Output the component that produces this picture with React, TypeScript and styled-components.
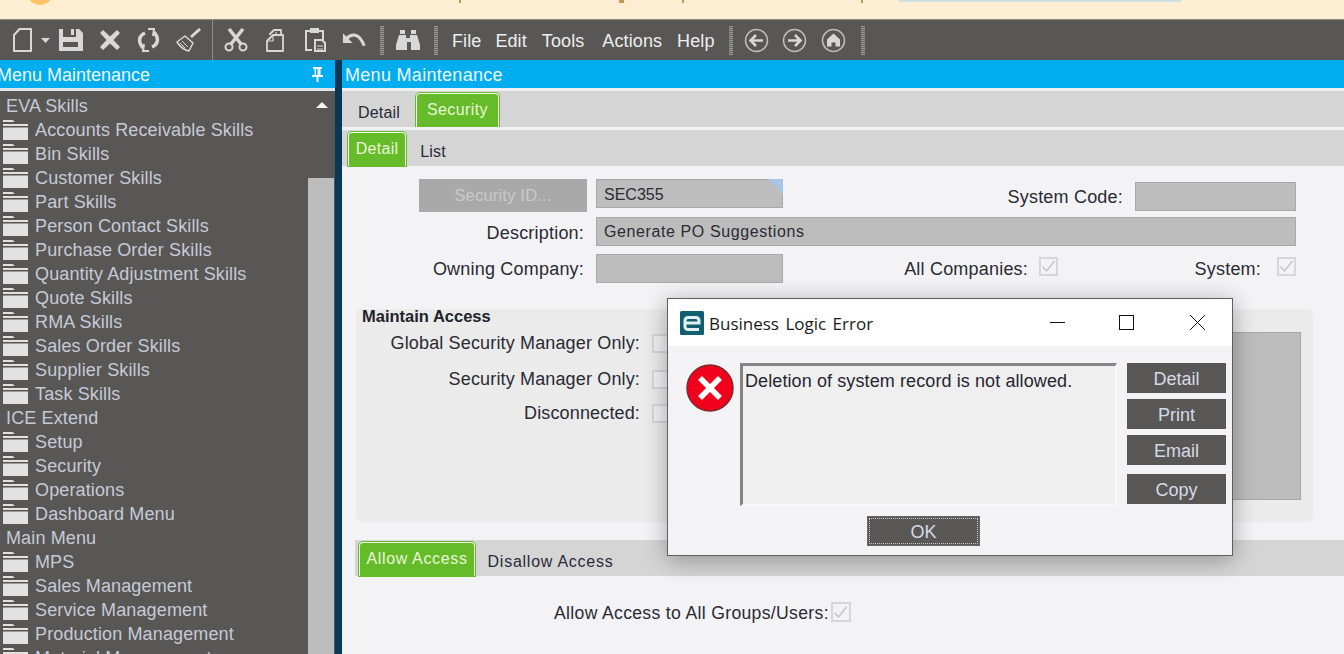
import React from "react"
import styled, { createGlobalStyle } from "styled-components"

const Global = createGlobalStyle`
  html, body {
    margin: 0;
    padding: 0;
    background: #f3f3f6;
  }
  * {
    box-sizing: border-box;
  }
`

const Page = styled.div`
  position: relative;
  width: 1344px;
  height: 654px;
  overflow: hidden;
  display: flex;
  flex-direction: column;
  font-family: "Liberation Sans", Arial, sans-serif;
  font-size: 18px;
  color: #2a2a33;
`

const Banner = styled.div`
  position: relative;
  height: 20px;
  flex: none;
  background: #fdedd3;
  border-bottom: 1px solid #8d867c;
  overflow: hidden;
`

const BannerCircle = styled.div`
  position: absolute;
  left: 27px;
  top: -21px;
  width: 26px;
  height: 26px;
  border-radius: 50%;
  background: #fdc466;
`

const BannerLink = styled.div`
  position: absolute;
  left: 899px;
  top: 0;
  width: 282px;
  height: 2px;
  background: #cfe0e2;
`

const BannerSpeck = styled.div<{ $left: number; $w?: number }>`
  position: absolute;
  left: ${p => p.$left}px;
  top: 0;
  width: ${p => p.$w ?? 2}px;
  height: 3px;
  background: #c09a55;
`

const Toolbar = styled.div`
  height: 40px;
  flex: none;
  display: flex;
  align-items: center;
  padding-left: 12px;
  background: #595755;
  color: #eeeeee;
`

const Tool = styled.svg<{ $gap: number }>`
  flex: none;
  margin-left: ${p => p.$gap}px;
  fill: none;
  stroke: #d8d8d8;
`

const ToolSolid = styled(Tool)`
  fill: #d8d8d8;
  stroke: none;
`

const Separator = styled.div<{ $gap: number }>`
  flex: none;
  align-self: stretch;
  width: 1px;
  margin-left: ${p => p.$gap}px;
  background: #8f8d8b;
`

const Grip = styled.div<{ $gap: number }>`
  flex: none;
  width: 4px;
  height: 29px;
  margin-left: ${p => p.$gap}px;
  background: repeating-linear-gradient(to bottom, #9a9896 0 1px, #6c6a68 1px 2px);
`

const MenuItem = styled.span<{ $gap: number }>`
  margin-left: ${p => p.$gap}px;
  letter-spacing: 0.1px;
  padding-top: 2px;
`

const Body = styled.div`
  flex: 1;
  min-height: 0;
  display: flex;
`

const Sidebar = styled.aside`
  width: 335px;
  flex: none;
  display: flex;
  flex-direction: column;
  overflow: hidden;
  background: #595755;
`

const Divider = styled.div`
  width: 7px;
  flex: none;
  background: #0b3756;
`

const BlueHeader = styled.div`
  height: 28px;
  flex: none;
  display: flex;
  align-items: center;
  justify-content: space-between;
  padding-top: 2px;
  background: #00adef;
  color: #eef8fd;
`

const SideTitle = styled.span`
  margin-left: -3px;
`

const MainTitle = styled.span`
  margin-left: 3px;
  letter-spacing: 0.3px;
`

const Pin = styled.svg`
  margin: -2px 12px 0 0;
  fill: #f4fbff;
`

const WhiteLine = styled.div<{ $color?: string }>`
  height: 3px;
  flex: none;
  background: ${p => p.$color ?? "#f0f1f3"};
`

const TreeArea = styled.div`
  flex: 1;
  min-height: 0;
  display: flex;
  justify-content: space-between;
`

const Tree = styled.div`
  padding-top: 3px;
  color: #c6cad6;
  letter-spacing: 0.13px;
`

const TreeGroup = styled.div`
  height: 24px;
  line-height: 24px;
  padding-left: 6px;
  white-space: nowrap;
`

const TreeItem = styled.div`
  height: 24px;
  display: flex;
  align-items: center;
  padding-left: 3px;
  white-space: nowrap;
`

const Folder = styled.svg`
  flex: none;
  margin-right: 7px;
  fill: #e2e2e2;
`

const ScrollColumn = styled.div`
  width: 27px;
  flex: none;
  display: flex;
  flex-direction: column;
  align-items: center;
`

const ScrollUp = styled.div`
  width: 0;
  height: 0;
  margin-top: 11px;
  margin-left: 1px;
  border-left: 6px solid transparent;
  border-right: 6px solid transparent;
  border-bottom: 6px solid #f4f4f4;
`

const ScrollThumb = styled.div`
  flex: 1;
  width: 26px;
  margin-top: 70px;
  margin-right: 1px;
  background: #bdbdbd;
`

const Main = styled.main`
  flex: 1;
  min-width: 0;
  display: flex;
  flex-direction: column;
  background: #f3f3f6;
`

const TabStrip = styled.div<{ $pad: number }>`
  height: 36px;
  flex: none;
  display: flex;
  align-items: flex-end;
  padding-left: ${p => p.$pad}px;
  background: #d5d5d5;
`

const Tab = styled.div<{ $active?: boolean; $w: number; $spread?: number }>`
  width: ${p => p.$w}px;
  height: ${p => (p.$active ? "34px" : "28px")};
  text-align: center;
  font-size: 16px;
  letter-spacing: ${p => p.$spread ?? 0.15}px;
  line-height: ${p => (p.$active ? "32px" : "28px")};
  white-space: nowrap;
  ${p =>
    p.$active
      ? `
    margin-right: 3px;
    background: #66bb2a;
    color: #e8f7d6;
    border: 1px solid #f3fbe9;
    border-bottom: none;
    border-radius: 4px 4px 0 0;
    box-shadow: 0 0 0 1px #66bb2a;
  `
      : `
    color: #2a2a3a;
  `}
`

const FormBlock = styled.div`
  display: flex;
  flex-direction: column;
  padding: 13px 48px 0 0;
  letter-spacing: 0.2px;
`

const FormRow = styled.div<{ $gap?: number }>`
  display: flex;
  align-items: center;
  margin-top: ${p => p.$gap ?? 0}px;
`

const IdRow = styled(FormRow)`
  align-items: flex-start;
  padding-left: 77px;
`

const IdButton = styled.div`
  width: 168px;
  height: 33px;
  display: flex;
  align-items: center;
  justify-content: center;
  margin-right: 9px;
  background: #a9a9a9;
  color: #c9c9c9;
  font-size: 16.5px;
  letter-spacing: 0.2px;
`

const Field = styled.div<{ $w?: number; $mt?: number; $ml?: number; $spread?: number; $lh?: number }>`
  position: relative;
  ${p => (p.$w ? `width: ${p.$w}px; flex: none;` : "flex: 1;")}
  height: 29px;
  margin-top: ${p => p.$mt ?? 0}px;
  margin-left: ${p => p.$ml ?? 0}px;
  padding-left: 7px;
  background: #bdbdbd;
  border: 1px solid #a8a8a8;
  line-height: ${p => p.$lh ?? 27}px;
  font-size: 16px;
  letter-spacing: ${p => p.$spread ?? 0}px;
  color: #2b2b33;
`

const FieldCorner = styled.div`
  position: absolute;
  right: -1px;
  top: -1px;
  width: 0;
  height: 0;
  border-top: 15px solid #a9c4e4;
  border-left: 15px solid transparent;
`

const FormLabel = styled.div<{ $w: number; $pt?: number; $mr?: number }>`
  width: ${p => p.$w}px;
  flex: none;
  padding-top: ${p => p.$pt ?? 0}px;
  margin-right: ${p => p.$mr ?? 0}px;
  text-align: right;
  white-space: nowrap;
`

const FlexLabel = styled.div<{ $mt?: number }>`
  flex: 1;
  text-align: right;
  white-space: nowrap;
  margin-top: ${p => p.$mt ?? 0}px;
  margin-right: 12px;
`

const Check = styled.div<{ $size?: number; $top?: number }>`
  flex: none;
  width: ${p => p.$size ?? 19}px;
  height: ${p => p.$size ?? 19}px;
  margin-top: ${p => p.$top ?? 0}px;
  border: 2px solid #d6d6d6;
  background: #f3f3f6;
  display: flex;
  align-items: center;
  justify-content: center;
`

const CheckMark = styled.svg`
  fill: none;
  stroke: #c4c4c4;
  stroke-width: 1.4;
`

const Panel = styled.section`
  position: relative;
  height: 213px;
  margin: 26px 31px 0 14px;
  padding: 23px 12px 22px 0;
  display: flex;
  justify-content: space-between;
  background: #ebebeb;
  border-radius: 6px;
  letter-spacing: 0.15px;
`

const PanelTitle = styled.div`
  position: absolute;
  left: 6px;
  top: -1px;
  font-size: 16.5px;
  font-weight: bold;
  line-height: 17px;
  letter-spacing: 0;
  color: #22222a;
`

const PanelRows = styled.div`
  display: flex;
  flex-direction: column;
`

const PanelRow = styled.div<{ $h: number }>`
  height: ${p => p.$h}px;
  display: flex;
  align-items: center;
`

const PanelCheck = styled(Check)`
  margin-left: 12px;
  background: #f1f1f3;
`

const PanelBox = styled.div`
  width: 560px;
  background: #bdbdbd;
  border: 1px solid #a8a8a8;
`

const LowerStrip = styled(TabStrip)`
  margin: 18px 0 0 13px;
`

const AccessRow = styled.div`
  display: flex;
  align-items: flex-start;
  padding: 26px 0 0 212px;
  font-size: 17.6px;
  letter-spacing: 0.33px;
`

const AccessLabel = styled.span`
  margin-right: 2px;
  line-height: 22px;
`

const Dialog = styled.div`
  position: absolute;
  left: 667px;
  top: 298px;
  width: 566px;
  height: 258px;
  display: flex;
  flex-direction: column;
  background: #f3f3f6;
  border: 1px solid #5f5f5f;
  box-shadow: 0 4px 22px rgba(0, 0, 0, 0.32);
`

const TitleBar = styled.div`
  height: 47px;
  flex: none;
  display: flex;
  align-items: center;
  padding-left: 12px;
  background: #ffffff;
`

const DialogTitle = styled.div`
  flex: 1;
  margin-left: 5px;
  padding-top: 1px;
  font-family: "Open Sans", "Noto Sans", sans-serif;
  font-size: 17px;
  word-spacing: 2px;
  color: #1a1a1a;
`

const WinIcon = styled.svg<{ $mr: number }>`
  flex: none;
  margin-right: ${p => p.$mr}px;
  fill: none;
  stroke: #111111;
  stroke-width: 1;
`

const DialogBody = styled.div`
  flex: 1;
  min-height: 0;
  display: flex;
  flex-direction: column;
  padding: 17px 6px 0 17px;
`

const DialogMain = styled.div`
  display: flex;
  align-items: flex-start;
`

const ErrorIcon = styled.svg`
  flex: none;
  margin-right: 5px;
`

const MessageBox = styled.div`
  width: 377px;
  height: 143px;
  flex: none;
  padding: 5px 0 0 2px;
  background: #efefef;
  border: 2px solid #f8f8f8;
  border-top: 3px solid #848484;
  border-left: 3px solid #848484;
  font-size: 18px;
  letter-spacing: 0.1px;
  line-height: 20px;
  color: #262630;
`

const ButtonColumn = styled.div`
  flex: 1;
  margin-left: 10px;
  display: flex;
  flex-direction: column;
  gap: 6px;
`

const DialogButton = styled.div<{ $mt?: number }>`
  height: 30px;
  margin-top: ${p => p.$mt ?? 0}px;
  display: flex;
  align-items: center;
  justify-content: center;
  padding-top: 2px;
  background: #595755;
  color: #d6dae6;
`

const OkRow = styled.div`
  display: flex;
  margin-top: 10px;
  padding-left: 182px;
`

const OkButton = styled.div`
  width: 113px;
  height: 30px;
  display: flex;
  align-items: center;
  justify-content: center;
  padding-top: 2px;
  background: #595755;
  color: #d6dae6;
  border: 1px solid #6a6866;
  outline: 1px dotted #c9c9c9;
  outline-offset: -3px;
`

const CheckBox = () => (
  <CheckMark width="15" height="15" viewBox="0 0 15 15">
    <path d="M1.5 7.5 L5.5 12 L13.5 2" />
  </CheckMark>
)

const FolderIcon = () => (
  <Folder width="25" height="22" viewBox="0 0 25 22">
    <path d="M0 1h10l1.5 2H0z" />
    <path d="M0 5h25v2H0z" />
    <path d="M0 8.500h25V21H0z" />
  </Folder>
)

const skillItems = [
  "Accounts Receivable Skills",
  "Bin Skills",
  "Customer Skills",
  "Part Skills",
  "Person Contact Skills",
  "Purchase Order Skills",
  "Quantity Adjustment Skills",
  "Quote Skills",
  "RMA Skills",
  "Sales Order Skills",
  "Supplier Skills",
  "Task Skills",
]

const extendItems = ["Setup", "Security", "Operations", "Dashboard Menu"]

const mainItems = [
  "MPS",
  "Sales Management",
  "Service Management",
  "Production Management",
  "Material Management",
]

const TreeSection = ({ title, items }: { title: string; items: string[] }) => (
  <>
    <TreeGroup>{title}</TreeGroup>
    {items.map(item => (
      <TreeItem key={item}>
        <FolderIcon />
        {item}
      </TreeItem>
    ))}
  </>
)

const TopToolbar = () => (
  <Toolbar>
    <Tool $gap={0} width="21" height="26" viewBox="0 0 21 26" strokeWidth={2}>
      <path d="M7.500 2H19v22H2V8z" strokeLinejoin="round" />
    </Tool>
    <ToolSolid $gap={8} width="9" height="5" viewBox="0 0 9 5">
      <path d="M0 0h9L4.500 5z" />
    </ToolSolid>
    <ToolSolid $gap={8} width="25" height="24" viewBox="0 0 25 24">
      <path
        fillRule="evenodd"
        d="M1 1h4v8h13V1h3l4 4v18H1zM5 14v5h15v-5zM13 1h3v6h-3z"
      />
    </ToolSolid>
    <ToolSolid $gap={17} width="20" height="20" viewBox="0 0 20 20">
      <path d="M3 0l7 6.500L17 0l3 3-6.500 7 6.500 7-3 3-7-6.500L3 20l-3-3 6.500-7L0 3z" />
    </ToolSolid>
    <Tool $gap={17} width="23" height="24" viewBox="0 0 23 24" strokeWidth={3.5}>
      <path d="M8 5C3 7 1 12 4 17l2 3" />
      <path d="M15 19c5-2 7-7 4-12l-2-3" />
      <path d="M11 1l6 0-1 7" strokeWidth={2} />
      <path d="M12 23l-6 0 1-7" strokeWidth={2} />
    </Tool>
    <Tool $gap={16} width="25" height="25" viewBox="0 0 25 25" strokeWidth={1.5}>
      <path d="M15 9L24 1" strokeWidth={3} />
      <path d="M9 8l8 7-4 8c-4-1-9-4-12-9z" strokeLinejoin="round" />
      <path d="M6 13l6 6M4 15l5 5" strokeWidth={1} />
    </Tool>
    <Separator $gap={11} />
    <Tool $gap={11} width="24" height="24" viewBox="0 0 24 24" strokeWidth={2}>
      <circle cx="5" cy="19" r="3.500" />
      <circle cx="19" cy="19" r="3.500" />
      <path d="M7 16L19 1M17 16L5 1" strokeWidth={3.5} />
    </Tool>
    <Tool $gap={17} width="20" height="25" viewBox="0 0 20 25" strokeWidth={1.8} strokeLinejoin="round">
      <path d="M5 7V6l4-4h7v6" />
      <path d="M2 13l6-6h10v16H2z" />
      <path d="M8 7v6H2M11 4v3" strokeWidth={1.2} />
    </Tool>
    <Tool $gap={19} width="22" height="26" viewBox="0 0 22 26" strokeWidth={2}>
      <path d="M8 23H2V4h17v9" />
      <path d="M7 5V2h7v3z" fill="#d8d8d8" />
      <path d="M11 13h7l3 3v8H11z" fill="#595755" />
      <path d="M13 19h6M13 22h6" strokeWidth={1.2} />
    </Tool>
    <Tool $gap={16} width="24" height="20" viewBox="0 0 25 20" strokeWidth={3.2}>
      <path d="M4 9c6-6 14-7 19 7" />
      <path d="M1 3v10h10z" fill="#d8d8d8" stroke="none" />
    </Tool>
    <Grip $gap={14} />
    <ToolSolid $gap={12} width="24" height="22" viewBox="0 0 24 22">
      <path d="M4 1h5v4H4zM15 1h5v4h-5z" />
      <path d="M3 6h7v3h4V6h7l3 10v5h-9v-8h-4v8H0v-5z" />
    </ToolSolid>
    <Grip $gap={14} />
    <MenuItem $gap={14}>File</MenuItem>
    <MenuItem $gap={14}>Edit</MenuItem>
    <MenuItem $gap={15}>Tools</MenuItem>
    <MenuItem $gap={18}>Actions</MenuItem>
    <MenuItem $gap={15}>Help</MenuItem>
    <Grip $gap={14} />
    <Tool $gap={11} width="25" height="25" viewBox="0 0 25 25" strokeWidth={1.5}>
      <circle cx="12.500" cy="12.500" r="11" stroke="#bdbdbd" />
      <path d="M19 12.500H7M12 7l-5.500 5.500L12 18" strokeWidth={2.5} />
    </Tool>
    <Tool $gap={13} width="25" height="25" viewBox="0 0 25 25" strokeWidth={1.5}>
      <circle cx="12.500" cy="12.500" r="11" stroke="#bdbdbd" />
      <path d="M6 12.500h12M13 7l5.500 5.500L13 18" strokeWidth={2.5} />
    </Tool>
    <Tool $gap={14} width="25" height="25" viewBox="0 0 25 25" strokeWidth={1.5}>
      <circle cx="12.500" cy="12.500" r="11" stroke="#bdbdbd" />
      <path d="M12.500 5.500L19 11.500v7h-4.500v-4h-4v4H6v-7z" fill="#d8d8d8" stroke="none" />
    </Tool>
    <Grip $gap={15} />
  </Toolbar>
)

const App = () => (
  <Page>
    <Global />
    <Banner>
      <BannerCircle />
      <BannerSpeck $left={459} />
      <BannerSpeck $left={619} $w={5} />
      <BannerSpeck $left={682} />
      <BannerSpeck $left={861} />
      <BannerLink />
    </Banner>
    <TopToolbar />
    <Body>
      <Sidebar>
        <BlueHeader>
          <SideTitle>Menu Maintenance</SideTitle>
          <Pin width="11" height="15" viewBox="0 0 11 15">
            <path
              fillRule="evenodd"
              d="M1 0h9v2H8.500v6H11v2H6.500v5h-2v-5H0V8h2.500V2H1zM4 2v6h1.500V2z"
            />
          </Pin>
        </BlueHeader>
        <WhiteLine $color="#dfe6e9" />
        <TreeArea>
          <Tree>
            <TreeSection title="EVA Skills" items={skillItems} />
            <TreeSection title="ICE Extend" items={extendItems} />
            <TreeSection title="Main Menu" items={mainItems} />
          </Tree>
          <ScrollColumn>
            <ScrollUp />
            <ScrollThumb />
          </ScrollColumn>
        </TreeArea>
      </Sidebar>
      <Divider />
      <Main>
        <BlueHeader>
          <MainTitle>Menu Maintenance</MainTitle>
        </BlueHeader>
        <WhiteLine />
        <TabStrip $pad={0}>
          <Tab $w={74}>Detail</Tab>
          <Tab $active $w={83} $spread={0.4}>
            Security
          </Tab>
        </TabStrip>
        <WhiteLine />
        <TabStrip $pad={6}>
          <Tab $active $w={58} $spread={0.3}>
            Detail
          </Tab>
          <Tab $w={48}>List</Tab>
        </TabStrip>
        <FormBlock>
          <IdRow>
            <IdButton>Security ID...</IdButton>
            <Field $w={187} $lh={30}>
              SEC355
              <FieldCorner />
            </Field>
            <FlexLabel $mt={8}>System Code:</FlexLabel>
            <Field $w={161} $mt={3} />
          </IdRow>
          <FormRow $gap={5}>
            <FormLabel $w={242} $pt={3}>
              Description:
            </FormLabel>
            <Field $ml={12} $spread={0.6}>
              Generate PO Suggestions
            </Field>
          </FormRow>
          <FormRow $gap={8}>
            <FormLabel $w={242} $pt={2}>
              Owning Company:
            </FormLabel>
            <Field $w={187} $ml={12} />
            <FormLabel $w={245} $pt={2} $mr={11}>
              All Companies:
            </FormLabel>
            <Check $top={-4}>
              <CheckBox />
            </Check>
            <FormLabel $w={203} $pt={2} $mr={16}>
              System:
            </FormLabel>
            <Check $top={-4}>
              <CheckBox />
            </Check>
          </FormRow>
        </FormBlock>
        <Panel>
          <PanelTitle>Maintain Access</PanelTitle>
          <PanelRows>
            <PanelRow $h={22}>
              <FormLabel $w={284}>Global Security Manager Only:</FormLabel>
              <PanelCheck />
            </PanelRow>
            <PanelRow $h={50}>
              <FormLabel $w={284}>Security Manager Only:</FormLabel>
              <PanelCheck />
            </PanelRow>
            <PanelRow $h={18}>
              <FormLabel $w={284}>Disconnected:</FormLabel>
              <PanelCheck />
            </PanelRow>
          </PanelRows>
          <PanelBox />
        </Panel>
        <LowerStrip $pad={4}>
          <Tab $active $w={116} $spread={0.65}>
            Allow Access
          </Tab>
          <Tab $w={145} $spread={0.75}>
            Disallow Access
          </Tab>
        </LowerStrip>
        <AccessRow>
          <AccessLabel>Allow Access to All Groups/Users:</AccessLabel>
          <Check $size={20}>
            <CheckBox />
          </Check>
        </AccessRow>
      </Main>
    </Body>
    <Dialog>
      <TitleBar>
        <svg width="24" height="24" viewBox="0 0 24 24">
          <rect width="24" height="24" rx="1.500" fill="#0f5f70" />
          <path
            d="M5 12h14V9.500A3 3 0 0 0 16 6.500H8A3 3 0 0 0 5 9.500v6a3 3 0 0 0 3 3h11"
            fill="none"
            stroke="#e3f1f2"
            strokeWidth="3"
          />
        </svg>
        <DialogTitle>Business Logic Error</DialogTitle>
        <WinIcon $mr={54} width="15" height="15" viewBox="0 0 15 15">
          <path d="M0 7.500h15" />
        </WinIcon>
        <WinIcon $mr={56} width="15" height="15" viewBox="0 0 15 15">
          <rect x="0.500" y="0.500" width="14" height="14" />
        </WinIcon>
        <WinIcon $mr={27} width="15" height="15" viewBox="0 0 15 15">
          <path d="M0 0l15 15M15 0L0 15" />
        </WinIcon>
      </TitleBar>
      <DialogBody>
        <DialogMain>
          <ErrorIcon width="50" height="50" viewBox="0 0 50 50">
            <circle cx="25" cy="25" r="23" fill="#f0001b" stroke="#7d2a33" strokeWidth="1.500" />
            <path d="M15 15l20 20M35 15L15 35" stroke="#ffffff" strokeWidth="5.500" />
          </ErrorIcon>
          <MessageBox>Deletion of system record is not allowed.</MessageBox>
          <ButtonColumn>
            <DialogButton>Detail</DialogButton>
            <DialogButton>Print</DialogButton>
            <DialogButton>Email</DialogButton>
            <DialogButton $mt={3}>Copy</DialogButton>
          </ButtonColumn>
        </DialogMain>
        <OkRow>
          <OkButton>OK</OkButton>
        </OkRow>
      </DialogBody>
    </Dialog>
  </Page>
)

export default App
